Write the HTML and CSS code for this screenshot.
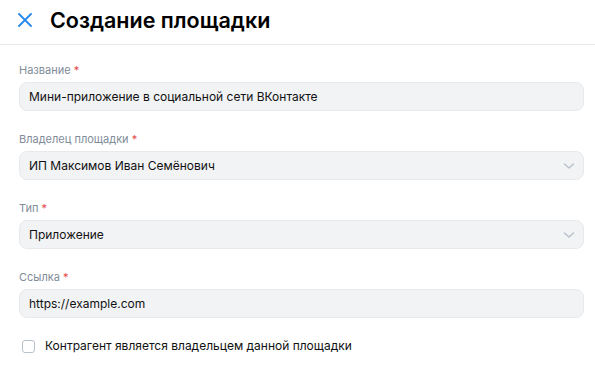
FILE: index.html
```html
<!DOCTYPE html>
<html lang="ru">
<head>
  <meta charset="UTF-8" />
  <title>Создание площадки</title>
  <link rel="stylesheet" href="styles.css">
</head>
<body>
  <header class="top">
    <button class="close" aria-label="Закрыть">
      <svg width="14" height="14" viewBox="0 0 14 14"><path d="M1 1L13 13M13 1L1 13" stroke="#2688eb" stroke-width="1.8" stroke-linecap="round"/></svg>
    </button>
    <h1>Создание площадки</h1>
  </header>

  <main class="form">
    <div class="field">
      <label>Название <span class="req">*</span></label>
      <div class="input">Мини-приложение в социальной сети ВКонтакте</div>
    </div>

    <div class="field">
      <label>Владелец площадки <span class="req">*</span></label>
      <div class="input select">
        <span>ИП Максимов Иван Семёнович</span>
        <svg width="12" height="8" viewBox="0 0 12 8"><path d="M1.5 2L6 6L10.5 2" fill="none" stroke="#b8c1cc" stroke-width="1.5" stroke-linecap="round" stroke-linejoin="round"/></svg>
      </div>
    </div>

    <div class="field">
      <label>Тип <span class="req">*</span></label>
      <div class="input select">
        <span>Приложение</span>
        <svg width="12" height="8" viewBox="0 0 12 8"><path d="M1.5 2L6 6L10.5 2" fill="none" stroke="#b8c1cc" stroke-width="1.5" stroke-linecap="round" stroke-linejoin="round"/></svg>
      </div>
    </div>

    <div class="field">
      <label>Ссылка <span class="req">*</span></label>
      <div class="input">https://example.com</div>
    </div>

    <label class="check">
      <span class="box"></span>
      Контрагент является владельцем данной площадки
    </label>
  </main>
</body>
</html>
```

FILE: styles.css
```css
* { box-sizing: border-box; }
body {
  margin: 0;
  font-family: Inter, "Noto Sans", sans-serif;
  background: #fff;
  color: #000;
}
.top {
  display: flex;
  align-items: center;
  height: 45px;
  padding: 0 18px 5px;
  border-bottom: 1px solid #e7e8ec;
}
.close {
  border: none;
  background: none;
  padding: 0;
  width: 14px;
  height: 14px;
  margin-right: 18px;
  display: flex;
}
.top h1 {
  margin: 0;
  font-size: 21.5px;
  font-weight: 600;
}
.form {
  padding: 17px 11px 0 19px;
}
.field {
  margin-bottom: 20px;
}
.field label {
  display: block;
  font-size: 11px;
  color: #818c99;
  line-height: 16px;
  margin-bottom: 4px;
}
.req { color: #e64646; }
.input {
  height: 29px;
  border: 1px solid #e8e9ec;
  background: #f2f3f5;
  border-radius: 8px;
  padding: 0 9px;
  font-size: 12px;
  display: flex;
  align-items: center;
  color: #111;
}
.select {
  justify-content: space-between;
}
.select svg { margin-right: -1px; }
.check {
  display: flex;
  align-items: center;
  font-size: 12px;
  line-height: 16px;
  padding-left: 3px;
  margin-top: 2px;
  color: #111;
}
.box {
  width: 13px;
  height: 13px;
  border: 1.2px solid #b8c1cc;
  border-radius: 3px;
  margin-right: 10px;
}
```
